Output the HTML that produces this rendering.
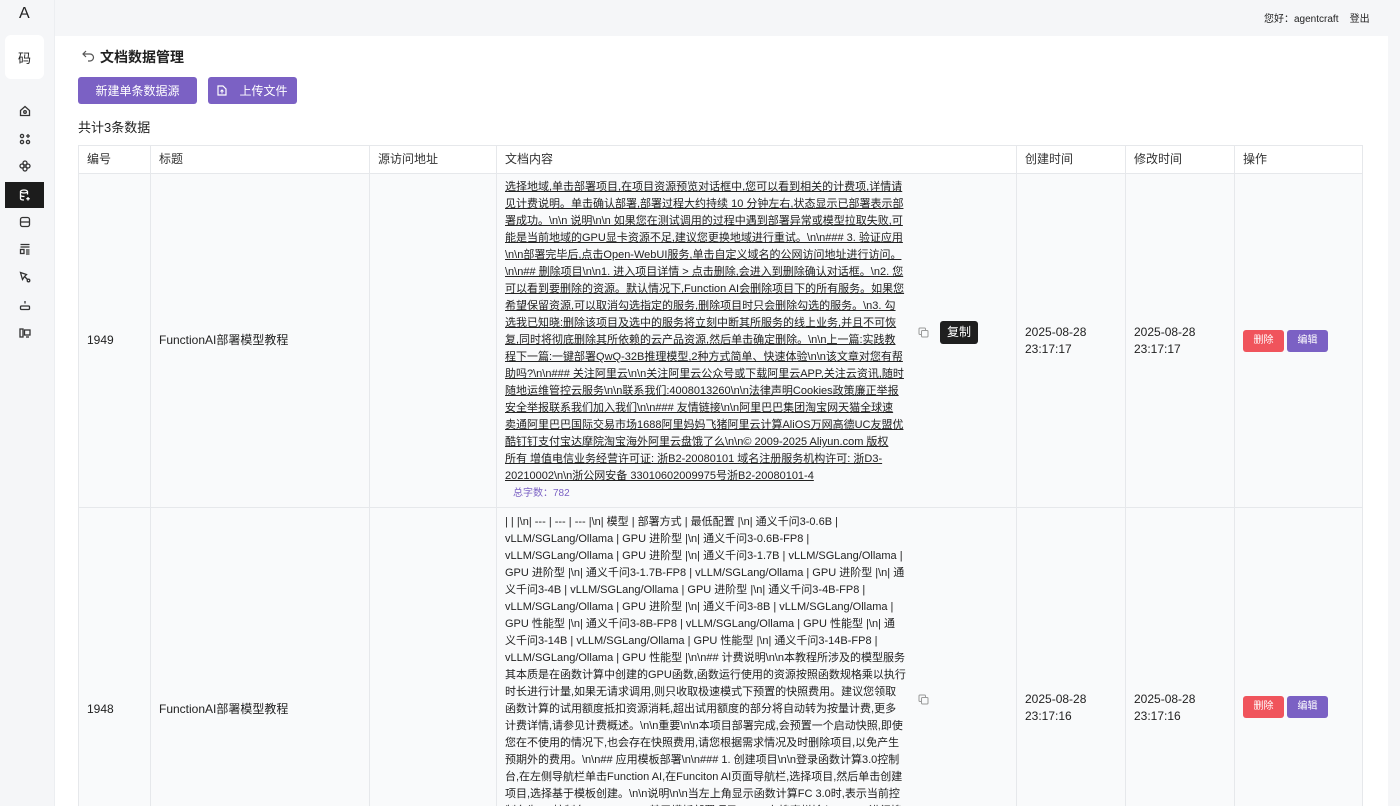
<!DOCTYPE html>
<html style="height:806px;overflow:hidden"><head><meta charset="utf-8"><style>
*{box-sizing:border-box;margin:0;padding:0}
body{width:1400px;height:806px;overflow:hidden;background:#f5f6f8;font-family:"Liberation Sans","Noto Sans CJK SC",sans-serif;color:#222;position:relative}
.abs{position:absolute}
.side{left:0;top:0;width:55px;height:806px;background:#f5f6f8;border-right:1px solid #eceef1}
.ic{position:absolute;left:5px;width:39px;height:26px;display:flex;align-items:center;justify-content:center}
.ic svg{width:12px;height:12px;stroke:#333;fill:none;stroke-width:1.3}
.main{left:55px;top:36px;width:1333px;height:770px;background:#fff}
.btn{position:absolute;top:77px;height:27px;background:#7b61c4;color:#fff;font-size:12px;border-radius:3px;display:flex;align-items:center;justify-content:center}
.wrap{position:absolute;left:78px;top:145px;width:1285px;height:661px;overflow:hidden}
table{border-collapse:collapse;font-size:12px;table-layout:fixed;line-height:17px}
td,th{border:1px solid #e6e8eb;text-align:left;font-weight:normal;padding:0 8px;vertical-align:middle}
th{height:28px;background:#fff;color:#333}
tr.r td{background:#f9fafb}
.txt{font-size:11px;line-height:17px;white-space:nowrap;color:#222}
.u{text-decoration:underline}
.cnt{color:#7b61c4;font-size:10px;margin-left:8px;line-height:17px}
.del,.ed{display:inline-block;width:41px;height:22px;border-radius:3px;color:#fff;font-size:10px;text-align:center;line-height:22px}
.del{background:#f0545c}.ed{background:#7b61c4;margin-left:3px}
</style></head><body>
<div class="abs side">
<div class="abs" style="left:19px;top:5px;font-size:16px">A</div>
<div class="abs" style="left:5px;top:35px;width:39px;height:44px;background:#fff;border-radius:6px;display:flex;align-items:center;justify-content:center;font-size:13px">码</div>
<div class="ic" style="top:98px"><svg viewBox="0 0 12 12"><path d="M1.5 5.5L6 1.5l4.5 4v5h-9z"/><circle cx="6" cy="7" r="1.3"/></svg></div>
<div class="ic" style="top:126px"><svg viewBox="0 0 12 12"><circle cx="3" cy="3" r="1.6"/><circle cx="3" cy="9" r="1.6"/><circle cx="9" cy="9" r="1.6"/><path d="M9 1v4M7 3h4"/></svg></div>
<div class="ic" style="top:153px"><svg viewBox="0 0 12 12"><circle cx="6" cy="3" r="2"/><circle cx="6" cy="9" r="2"/><circle cx="3" cy="6" r="2"/><circle cx="9" cy="6" r="2"/></svg></div>
<div class="ic" style="top:182px;background:#1c1c1c"><svg viewBox="0 0 12 12" style="stroke:#fff"><ellipse cx="5" cy="2.5" rx="3.5" ry="1.5"/><path d="M1.5 2.5v7c0 1 1.5 1.5 3.5 1.5M8.5 2.5v3M1.5 6c0 1 2 1.5 4 1.5M9 8v3.5M7.3 9.7h3.4"/></svg></div>
<div class="ic" style="top:209px"><svg viewBox="0 0 12 12"><rect x="1.5" y="1.5" width="9" height="9" rx="2"/><path d="M1.5 6h9"/></svg></div>
<div class="ic" style="top:236px"><svg viewBox="0 0 12 12"><path d="M1.5 1.5h9M1.5 4h9"/><rect x="1.5" y="6.5" width="3.5" height="4"/><path d="M7 7h3.5M7 9h3.5M7 11h3.5"/></svg></div>
<div class="ic" style="top:264px"><svg viewBox="0 0 12 12"><path d="M1.5 1.5l6 2-2 2-2 3z"/><circle cx="9.5" cy="9.5" r="1.3"/><path d="M5.5 5.5l3 3"/></svg></div>
<div class="ic" style="top:292px"><svg viewBox="0 0 12 12"><rect x="1.5" y="7" width="9" height="3.5" rx="1"/><path d="M6 2v2.5"/></svg></div>
<div class="ic" style="top:320px"><svg viewBox="0 0 12 12"><rect x="1" y="2" width="3" height="8"/><rect x="5.5" y="3" width="5.5" height="5"/><path d="M7 10h3"/></svg></div>
</div>
<div class="abs" style="left:1264px;top:10px;font-size:10px;color:#222">您好：agentcraft &nbsp;&nbsp;&nbsp;登出</div>
<div class="abs main"></div>
<svg class="abs" style="left:82px;top:50px" width="14" height="12" viewBox="0 0 14 12"><path d="M4 1L1 4l3 3M1 4h7a3.5 3.5 0 010 7H6" fill="none" stroke="#555" stroke-width="1.2"/></svg>
<div class="abs" style="left:100px;top:47px;font-size:14px;font-weight:bold">文档数据管理</div>
<div class="btn" style="left:78px;width:119px">新建单条数据源</div>
<div class="btn" style="left:208px;width:89px"><svg width="10" height="11" viewBox="0 0 10 11" style="margin-right:12px"><path d="M1 1h5l3 3v6H1z" fill="none" stroke="#fff" stroke-width="1.2"/><path d="M5 8.5V5M3.5 6.5L5 5l1.5 1.5" fill="none" stroke="#fff"/></svg>上传文件</div>
<div class="abs" style="left:78px;top:117px;font-size:13px">共计3条数据</div>
<div class="wrap">
<table>
<colgroup><col style="width:72px"><col style="width:219px"><col style="width:127px"><col style="width:520px"><col style="width:109px"><col style="width:109px"><col style="width:128px"></colgroup>
<tr><th>编号</th><th>标题</th><th>源访问地址</th><th>文档内容</th><th>创建时间</th><th>修改时间</th><th>操作</th></tr>
<tr class="r" style="height:334px"><td>1949</td><td>FunctionAI部署模型教程</td><td></td><td style="position:relative"><div class="txt u">选择地域,单击部署项目,在项目资源预览对话框中,您可以看到相关的计费项,详情请<br>见计费说明。单击确认部署,部署过程大约持续 10 分钟左右,状态显示已部署表示部<br>署成功。\n\n 说明\n\n 如果您在测试调用的过程中遇到部署异常或模型拉取失败,可<br>能是当前地域的GPU显卡资源不足,建议您更换地域进行重试。\n\n### 3. 验证应用<br>\n\n部署完毕后,点击Open-WebUI服务,单击自定义域名的公网访问地址进行访问。<br>\n\n## 删除项目\n\n1. 进入项目详情 &gt; 点击删除,会进入到删除确认对话框。\n2. 您<br>可以看到要删除的资源。默认情况下,Function AI会删除项目下的所有服务。如果您<br>希望保留资源,可以取消勾选指定的服务,删除项目时只会删除勾选的服务。\n3. 勾<br>选我已知晓:删除该项目及选中的服务将立刻中断其所服务的线上业务,并且不可恢<br>复,同时将彻底删除其所依赖的云产品资源,然后单击确定删除。\n\n上一篇:实践教<br>程下一篇:一键部署QwQ-32B推理模型,2种方式简单、快速体验\n\n该文章对您有帮<br>助吗?\n\n### 关注阿里云\n\n关注阿里云公众号或下载阿里云APP,关注云资讯,随时<br>随地运维管控云服务\n\n联系我们:4008013260\n\n法律声明Cookies政策廉正举报<br>安全举报联系我们加入我们\n\n### 友情链接\n\n阿里巴巴集团淘宝网天猫全球速<br>卖通阿里巴巴国际交易市场1688阿里妈妈飞猪阿里云计算AliOS万网高德UC友盟优<br>酷钉钉支付宝达摩院淘宝海外阿里云盘饿了么\n\n© 2009-2025 Aliyun.com 版权<br>所有 增值电信业务经营许可证: 浙B2-20080101 域名注册服务机构许可: 浙D3-<br>20210002\n\n浙公网安备 33010602009975号浙B2-20080101-4</div><div class="cnt">总字数：782</div>
<svg class="abs" style="left:421px;top:153px" width="11" height="11" viewBox="0 0 11 11"><rect x="1" y="1" width="6.5" height="6.5" rx="1" fill="none" stroke="#999"/><rect x="3.5" y="3.5" width="6.5" height="6.5" rx="1" fill="#f9fafb" stroke="#999"/></svg>
<div class="abs" style="left:443px;top:147px;width:38px;height:23px;background:#1f1f1f;color:#fff;border-radius:3px;font-size:12px;line-height:23px;text-align:center">复制</div></td>
<td>2025-08-28<br>23:17:17</td><td>2025-08-28<br>23:17:17</td><td><span class="del">删除</span><span class="ed">编辑</span></td></tr>
<tr class="r" style="height:400px"><td style="vertical-align:top;padding-top:193px">1948</td><td style="vertical-align:top;padding-top:193px">FunctionAI部署模型教程</td><td></td><td style="vertical-align:top;padding-top:6px;position:relative"><div class="txt">| | |\n| --- | --- | --- |\n| 模型 | 部署方式 | 最低配置 |\n| 通义千问3-0.6B |<br>vLLM/SGLang/Ollama | GPU 进阶型 |\n| 通义千问3-0.6B-FP8 |<br>vLLM/SGLang/Ollama | GPU 进阶型 |\n| 通义千问3-1.7B | vLLM/SGLang/Ollama |<br>GPU 进阶型 |\n| 通义千问3-1.7B-FP8 | vLLM/SGLang/Ollama | GPU 进阶型 |\n| 通<br>义千问3-4B | vLLM/SGLang/Ollama | GPU 进阶型 |\n| 通义千问3-4B-FP8 |<br>vLLM/SGLang/Ollama | GPU 进阶型 |\n| 通义千问3-8B | vLLM/SGLang/Ollama |<br>GPU 性能型 |\n| 通义千问3-8B-FP8 | vLLM/SGLang/Ollama | GPU 性能型 |\n| 通<br>义千问3-14B | vLLM/SGLang/Ollama | GPU 性能型 |\n| 通义千问3-14B-FP8 |<br>vLLM/SGLang/Ollama | GPU 性能型 |\n\n## 计费说明\n\n本教程所涉及的模型服务<br>其本质是在函数计算中创建的GPU函数,函数运行使用的资源按照函数规格乘以执行<br>时长进行计量,如果无请求调用,则只收取极速模式下预置的快照费用。建议您领取<br>函数计算的试用额度抵扣资源消耗,超出试用额度的部分将自动转为按量计费,更多<br>计费详情,请参见计费概述。\n\n重要\n\n本项目部署完成,会预置一个启动快照,即使<br>您在不使用的情况下,也会存在快照费用,请您根据需求情况及时删除项目,以免产生<br>预期外的费用。\n\n## 应用模板部署\n\n### 1. 创建项目\n\n登录函数计算3.0控制<br>台,在左侧导航栏单击Function AI,在Funciton AI页面导航栏,选择项目,然后单击创建<br>项目,选择基于模板创建。\n\n说明\n\n当左上角显示函数计算FC 3.0时,表示当前控<br>制台为3.0控制台。\n\n### 2. 基于模板部署项目\n\n1. 在搜索栏输入Qwen3进行搜</div>
<svg class="abs" style="left:421px;top:186px" width="11" height="11" viewBox="0 0 11 11"><rect x="1" y="1" width="6.5" height="6.5" rx="1" fill="none" stroke="#999"/><rect x="3.5" y="3.5" width="6.5" height="6.5" rx="1" fill="#f9fafb" stroke="#999"/></svg></td>
<td style="vertical-align:top;padding-top:183px">2025-08-28<br>23:17:16</td><td style="vertical-align:top;padding-top:183px">2025-08-28<br>23:17:16</td><td style="vertical-align:top;padding-top:188px"><span class="del">删除</span><span class="ed">编辑</span></td></tr>
</table>
</div>
</body></html>
